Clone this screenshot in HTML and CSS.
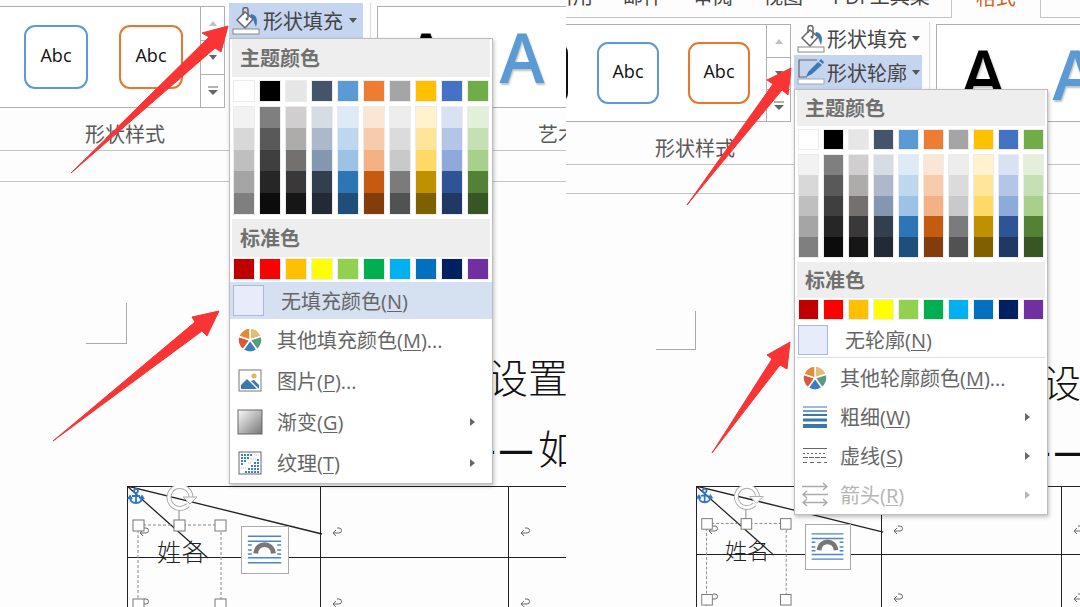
FILE: index.html
```html
<!DOCTYPE html>
<html lang="zh-CN">
<head>
    <meta charset="UTF-8">
    <meta name="viewport" content="width=device-width, initial-scale=1.0">
    <title>形状填充与形状轮廓</title>
    <link rel="stylesheet" href="styles.css">
</head>
<body>
    <!-- shared icons -->
    <svg class="defs" width="0" height="0" aria-hidden="true">
        <symbol id="icon-bucket" viewBox="0 0 28 28">
            <path d="M13 5 L5 13 L13 21 L21 12 Z" fill="#fff" stroke="#666" stroke-width="1.5"/>
            <path d="M11 8 V3 a2.5 2.5 0 0 1 5 0 V11" fill="none" stroke="#666" stroke-width="1.5"/>
            <circle cx="15" cy="12" r="1.5" fill="#666"/>
            <path d="M19 7 C25 8 26 13 24 20 C22 16 22 12 18 9 Z" fill="#3d78b5"/>
            <rect x="1" y="22" width="26" height="5" fill="#fff" stroke="#888"/>
        </symbol>
        <symbol id="icon-outline" viewBox="0 0 28 28">
            <path d="M20 2 H2 V19 H10" fill="none" stroke="#666" stroke-width="1.2"/>
            <path d="M9 19 L11 14 L21 4 L25 7 L15 16 Z" fill="#3d78b5"/>
            <path d="M22 3 L24 1 L27 4 L26 6 Z" fill="#3d78b5"/>
            <rect x="1" y="21" width="26" height="5" fill="#fff" stroke="#9aa7bd"/>
        </symbol>
        <symbol id="icon-wheel" viewBox="0 0 26 26">
            <g stroke="#fff" stroke-width="1.5">
                <path d="M13 13 V1 A12 12 0 0 1 24.4 9.3 Z" fill="#e3bd74"/>
                <path d="M13 13 L24.4 9.3 A12 12 0 0 1 20 22.7 Z" fill="#5a9a82"/>
                <path d="M13 13 L20 22.7 A12 12 0 0 1 6 22.7 Z" fill="#3c7dc0"/>
                <path d="M13 13 L6 22.7 A12 12 0 0 1 1.6 9.3 Z" fill="#d95836"/>
                <path d="M13 13 L1.6 9.3 A12 12 0 0 1 13 1 Z" fill="#e08c3c"/>
            </g>
        </symbol>
        <symbol id="icon-picture" viewBox="0 0 26 26">
            <rect x="2" y="2" width="22" height="21" fill="#fff" stroke="#777"/>
            <circle cx="17" cy="8" r="2.5" fill="#dfb45c"/>
            <path d="M4 21 V17 L10 11 L20 21 Z" fill="#3d78ab"/>
            <path d="M14 13 L17 12 L22 17 V21 Z" fill="#3d78ab"/>
        </symbol>
        <linearGradient id="gray" x1="0" y1="0" x2="1" y2="1">
            <stop offset="0" stop-color="#fafafa"/>
            <stop offset="1" stop-color="#757575"/>
        </linearGradient>
        <symbol id="icon-gradient" viewBox="0 0 26 26">
            <rect x="1" y="1" width="24" height="24" fill="url(#gray)" stroke="#666"/>
        </symbol>
        <symbol id="icon-texture" viewBox="0 0 26 26">
            <rect x="2" y="2" width="22" height="22" fill="#fff" stroke="#666"/>
            <g stroke="#3f7fbf" stroke-width="2" stroke-dasharray="2 1">
                <path d="M4 5 H15 M4 8 H12 M4 11 H9 M4 14 H7"/>
                <path d="M20 10 H23 M17 13 H23 M14 16 H23 M11 19 H23 M8 22 H23"/>
            </g>
            <path d="M17 5 H22 M14 9 H19 M11 13 H15 M4 18 H10" stroke="#a9c6e4" stroke-dasharray="1 1"/>
        </symbol>
        <symbol id="icon-weight" viewBox="0 0 26 26">
            <path d="M1 3 H25" stroke="#3d78b5" stroke-width="1"/>
            <path d="M1 7 H25" stroke="#3d78b5" stroke-width="1.5"/>
            <path d="M1 11 H25" stroke="#3d78b5" stroke-width="2"/>
            <path d="M1 16 H25" stroke="#3d78ab" stroke-width="3"/>
            <path d="M1 22 H25" stroke="#3d78ab" stroke-width="4"/>
        </symbol>
        <symbol id="icon-dashes" viewBox="0 0 26 26" stroke="#666">
            <path d="M1 5.5 H25"/>
            <path d="M1 10.5 H25" stroke-dasharray="2 2"/>
            <path d="M1 14.5 H25" stroke-dasharray="5 1"/>
            <path d="M1 19.5 H25" stroke-dasharray="4 3"/>
        </symbol>
        <symbol id="icon-arrows" viewBox="0 0 26 26">
            <path d="M0 4.5 H25 M21 1 L25 4.5 L21 8 M26 12.5 H1 M5 9 L1 12.5 L5 16 M1 20.5 H25 M5 17 L1 20.5 L5 24 M21 17 L25 20.5 L21 24" fill="none" stroke="#aaa" stroke-width="1.5"/>
        </symbol>
        <symbol id="icon-return" viewBox="0 0 10 10">
            <path d="M5 1 H7 a2 2 0 0 1 0 5 H1 M4 3 L1 6 L4 9" fill="none" stroke="#666"/>
        </symbol>
        <symbol id="icon-more" viewBox="0 0 12 10">
            <path d="M1 1 H11" stroke="#666"/>
            <path d="M1 4 H11 L6 9 Z" fill="#666"/>
        </symbol>
        <!-- diagonal header cell with a selected text box -->
        <symbol id="shape-lines" viewBox="0 0 200 125">
            <path d="M0 0 L81 72 M0 0 L195 48" stroke="#222" stroke-width="1.3" fill="none"/>
            <g stroke="#2f74c8" stroke-width="1.8" fill="none">
                <circle cx="9" cy="5" r="2"/>
                <path d="M9 7 V17 M5 10 H13 M3 11 C3 16 6 17 9 17 C12 17 15 16 15 11 M1 13 L3 10 L5 13 M13 13 L15 10 L17 13"/>
            </g>
            <path d="M11 39 H94 V125 M11 39 V125" fill="none" stroke="#888" stroke-dasharray="3 2"/>
            <path d="M52 24 V36" stroke="#888"/>
            <path d="M61 19 A11 11 0 1 1 64 11" fill="none" stroke="#aaa" stroke-width="5"/>
            <path d="M61 19 A11 11 0 1 1 64 11" fill="none" stroke="#fff" stroke-width="3"/>
            <path d="M56 11 H70 L63 18 Z" fill="#fff" stroke="#aaa"/>
            <g fill="#fff" stroke="#777">
                <rect x="6" y="34" width="11" height="11"/>
                <rect x="47" y="34" width="11" height="11"/>
                <rect x="88" y="34" width="11" height="11"/>
                <rect x="6" y="113" width="11" height="11"/>
                <rect x="88" y="113" width="11" height="11"/>
            </g>
        </symbol>
        <symbol id="icon-layout" viewBox="0 0 47 47">
            <path d="M6 9.5 H40 M6 14.5 H40 M6 18.5 H10 M6 23.5 H10 M6 27.5 H10 M36 18.5 H40 M36 23.5 H40 M36 27.5 H40 M6 31.5 H40 M6 36.5 H40" stroke="#4a86c5" stroke-width="1.5"/>
            <path d="M14 27 C15 15 31 15 32 27" fill="none" stroke="#777" stroke-width="5"/>
        </symbol>
    </svg>

    <main class="compare">
        <section class="shot shot-fill">
            <div class="ribbon">
                <div class="group">
                    <div class="group-body">
                        <div class="gallery">
                            <div class="styles">
                                <button class="style blue">Abc</button>
                                <button class="style orange">Abc</button>
                            </div>
                            <div class="scroller">
                                <button class="up" aria-label="上一行" disabled></button>
                                <button class="down" aria-label="下一行"></button>
                                <button aria-label="其他"><svg width="12" height="10"><use href="#icon-more"/></svg></button>
                            </div>
                        </div>
                        <div class="commands">
                            <div class="dropdown">
                                <button class="command open">
                                    <svg width="28" height="28"><use href="#icon-bucket"/></svg>形状填充<span class="caret"></span>
                                </button>
                                <div class="menu">
                                    <h2>主题颜色</h2>
                                    <div class="swatches theme"></div>
                                    <div class="tints"></div>
                                    <h2>标准色</h2>
                                    <div class="swatches standard"></div>
                                    <button class="item none selected"><span class="empty"></span><span>无填充颜色(<u>N</u>)</span></button>
                                    <button class="item"><svg width="26" height="26"><use href="#icon-wheel"/></svg><span>其他填充颜色(<u>M</u>)...</span></button>
                                    <button class="item"><svg width="26" height="26"><use href="#icon-picture"/></svg><span>图片(<u>P</u>)...</span></button>
                                    <button class="item sub"><svg width="26" height="26"><use href="#icon-gradient"/></svg><span>渐变(<u>G</u>)</span></button>
                                    <button class="item sub"><svg width="26" height="26"><use href="#icon-texture"/></svg><span>纹理(<u>T</u>)</span></button>
                                </div>
                            </div>
                        </div>
                    </div>
                    <div class="group-label">形状样式</div>
                </div>
                <div class="group wordart">
                    <div class="group-body">
                        <div class="gallery">
                            <button class="letter black">A</button>
                            <button class="letter sky">A</button>
                        </div>
                    </div>
                    <div class="group-label">艺术字样式</div>
                </div>
            </div>
            <div class="ruler"></div>
            <div class="page">
                <div class="crop-mark"></div>
                <div class="title">
                    <p>设置</p>
                    <p><span class="dash">—</span><span class="dash">—</span>如</p>
                </div>
                <div class="sheet">
                    <table>
                        <tr>
                            <td><svg width="10" height="10"><use href="#icon-return"/></svg></td>
                            <td><svg width="10" height="10"><use href="#icon-return"/></svg></td>
                            <td><svg width="10" height="10"><use href="#icon-return"/></svg></td>
                        </tr>
                        <tr>
                            <td><svg width="10" height="10"><use href="#icon-return"/></svg></td>
                            <td><svg width="10" height="10"><use href="#icon-return"/></svg></td>
                            <td><svg width="10" height="10"><use href="#icon-return"/></svg></td>
                        </tr>
                    </table>
                    <svg class="shape"><use href="#shape-lines"/></svg>
                    <span class="name">姓名</span>
                    <button class="layout" aria-label="布局选项"><svg><use href="#icon-layout"/></svg></button>
                </div>
            </div>
            <svg class="pointers">
                <path d="M71 173 L209 37 L202 33 L228 26 L221 52 L215 48 Z"/>
                <path d="M53 441 L195 322 L192 317 L219 311 L207 336 L202 331 Z"/>
            </svg>
        </section>

        <section class="shot shot-outline">
            <nav class="tabs">
                <a href="#">引用</a>
                <a href="#">邮件</a>
                <a href="#">审阅</a>
                <a href="#">视图</a>
                <a href="#">PDF工具集</a>
                <a href="#" class="active">格式</a>
            </nav>
            <div class="ribbon">
                <div class="group">
                    <div class="group-body">
                        <div class="gallery">
                            <div class="styles">
                                <button class="style dark" aria-label="黑色"></button>
                                <button class="style blue">Abc</button>
                                <button class="style orange">Abc</button>
                            </div>
                            <div class="scroller">
                                <button class="up" aria-label="上一行" disabled></button>
                                <button class="down" aria-label="下一行"></button>
                                <button aria-label="其他"><svg width="12" height="10"><use href="#icon-more"/></svg></button>
                            </div>
                        </div>
                        <div class="commands">
                            <button class="command">
                                <svg width="28" height="28"><use href="#icon-bucket"/></svg>形状填充<span class="caret"></span>
                            </button>
                            <div class="dropdown">
                                <button class="command open">
                                    <svg width="28" height="28"><use href="#icon-outline"/></svg>形状轮廓<span class="caret"></span>
                                </button>
                                <div class="menu">
                                    <h2>主题颜色</h2>
                                    <div class="swatches theme"></div>
                                    <div class="tints"></div>
                                    <h2>标准色</h2>
                                    <div class="swatches standard"></div>
                                    <button class="item none"><span class="empty"></span><span>无轮廓(<u>N</u>)</span></button>
                                    <hr>
                                    <button class="item"><svg width="26" height="26"><use href="#icon-wheel"/></svg><span>其他轮廓颜色(<u>M</u>)...</span></button>
                                    <button class="item sub"><svg width="26" height="26"><use href="#icon-weight"/></svg><span>粗细(<u>W</u>)</span></button>
                                    <button class="item sub"><svg width="26" height="26"><use href="#icon-dashes"/></svg><span>虚线(<u>S</u>)</span></button>
                                    <button class="item sub" disabled><svg width="26" height="26"><use href="#icon-arrows"/></svg><span>箭头(<u>R</u>)</span></button>
                                </div>
                            </div>
                        </div>
                    </div>
                    <div class="group-label">形状样式</div>
                </div>
                <div class="group wordart">
                    <div class="group-body">
                        <div class="gallery">
                            <button class="letter black">A</button>
                            <button class="letter sky">A</button>
                        </div>
                    </div>
                    <div class="group-label"></div>
                </div>
            </div>
            <div class="ruler"></div>
            <div class="page">
                <div class="crop-mark"></div>
                <div class="title">
                    <p>设</p>
                    <p><span class="dash">—</span><span class="dash">—</span></p>
                </div>
                <div class="sheet">
                    <table>
                        <tr>
                            <td><svg width="10" height="10"><use href="#icon-return"/></svg></td>
                            <td><svg width="10" height="10"><use href="#icon-return"/></svg></td>
                            <td><svg width="10" height="10"><use href="#icon-return"/></svg></td>
                        </tr>
                        <tr>
                            <td><svg width="10" height="10"><use href="#icon-return"/></svg></td>
                            <td><svg width="10" height="10"><use href="#icon-return"/></svg></td>
                            <td><svg width="10" height="10"><use href="#icon-return"/></svg></td>
                        </tr>
                    </table>
                    <svg class="shape"><use href="#shape-lines"/></svg>
                    <span class="name">姓名</span>
                    <button class="layout" aria-label="布局选项"><svg><use href="#icon-layout"/></svg></button>
                </div>
            </div>
            <svg class="pointers">
                <path d="M121 205 L207 84 L201 80 L225 68 L222 95 L216 90 Z"/>
                <path d="M146 453 L206 359 L201 355 L224 342 L221 369 L214 365 Z"/>
            </svg>
        </section>
    </main>

    <script src="script.js"></script>
</body>
</html>
```
FILE: styles.css
```css
:root {
    --line: #c4c4c4;
    --text: #595959;
    --menu-head: #eeeeee;
    --open-bg: #c5d5f0;
    --hover-bg: #d5e0f0;
    --blue: #5b9bd5;
    --orange: #e8762d;
    --pointer: #f83434;
}

* {
    box-sizing: border-box;
}

body {
    margin: 0;
    font-family: "Open Sans", "Noto Sans CJK SC", sans-serif;
    font-size: 20px;
    color: var(--text);
    background-color: #fdfdfd;
}

button {
    font: inherit;
    color: inherit;
    background: none;
    border: none;
    padding: 0;
    cursor: pointer;
}

p, h2 {
    margin: 0;
}

.defs {
    position: absolute;
}

.compare {
    display: grid;
    grid-template-columns: 566fr 514fr;
    height: 100vh;
    overflow: hidden;
}

.shot {
    position: relative;
    overflow: hidden;
    min-width: 0;
}

.shot-fill {
    --style-size: 64px;
    --menu-width: 264px;
    --head: 38px;
    --swatch: 20px;
    --tints: 107px;
    --none: 37px;
    --empty: 31px;
    --row: 41px;
    --item-gap: 14px;
    --name-size: 24px;
    --title-size: 40px;
}

.shot-outline {
    --style-size: 62px;
    --menu-width: 254px;
    --head: 36px;
    --swatch: 19px;
    --tints: 102px;
    --none: 35px;
    --empty: 30px;
    --row: 39px;
    --item-gap: 12px;
    --name-size: 22px;
    --title-size: 38px;
}

/* tabs */
.tabs {
    display: flex;
    align-items: flex-end;
    height: 18px;
    margin-left: -28px;
    border-bottom: 1px solid var(--line);
}

.tabs a {
    flex: none;
    padding: 0 15px;
    line-height: 40px;
    color: #444;
    text-decoration: none;
}

.tabs .active {
    margin: 0 0 -1px 6px;
    padding: 0 24px;
    color: #d2601f;
    background-color: #fdfdfd;
    border: 1px solid var(--line);
    border-width: 0 1px;
}

/* ribbon */
.ribbon {
    display: flex;
    border-bottom: 1px solid var(--line);
}

.shot-fill .ribbon {
    padding-top: 3px;
}

.shot-outline .ribbon {
    padding-top: 4px;
}

.group {
    flex: none;
}

.group-body {
    display: flex;
    gap: 4px;
}

.shot-outline .group-body {
    gap: 3px;
}

.gallery {
    display: flex;
    margin-top: 3px;
    height: 102px;
    background-color: #fff;
    border: 1px solid #b0b0b0;
    border-left: none;
}

.shot-outline .gallery {
    margin-top: 2px;
    height: 98px;
}

.styles {
    display: flex;
    align-items: center;
    gap: 31px;
    width: 200px;
    padding-left: 24px;
    overflow: hidden;
}

.shot-outline .styles {
    gap: 29px;
    padding-left: 0;
    justify-content: flex-end;
    padding-right: 16px;
}

.style {
    flex: none;
    width: var(--style-size);
    height: var(--style-size);
    font-size: 18px;
    line-height: 20px;
    padding-bottom: 4px;
    color: #111;
    background-color: #fff;
    border: 2px solid var(--blue);
    border-radius: 11px;
}

.style.orange {
    border-color: var(--orange);
}

.style.dark {
    border-color: #111;
}

.scroller {
    display: grid;
    grid-template-rows: repeat(3, 1fr);
    width: 24px;
    border-left: 1px solid #b0b0b0;
}

.scroller button {
    display: flex;
    align-items: center;
    justify-content: center;
}

.scroller button + button {
    border-top: 1px solid #b0b0b0;
}

.up::before,
.down::before {
    content: "";
    border: 4px solid transparent;
    border-top: 5px solid #666;
    border-bottom: none;
}

.up::before {
    border-top: none;
    border-bottom: 5px solid #c0c0c0;
}

.commands {
    padding-right: 7px;
    border-right: 1px solid #dcdcdc;
}

.dropdown {
    position: relative;
}

.command {
    display: flex;
    align-items: center;
    gap: 3px;
    width: 134px;
    height: 35px;
    padding-left: 3px;
    white-space: nowrap;
    color: #444;
}

.shot-outline .command {
    width: 128px;
    height: 33px;
    gap: 2px;
}

.command.open {
    background-color: var(--open-bg);
}

.shot-outline .command.open {
    height: 34px;
}

.caret {
    margin-left: 3px;
    border: 4px solid transparent;
    border-top: 5px solid #555;
    border-bottom: none;
}

.group-label {
    height: 42px;
    padding: 12px 0 0 85px;
    line-height: 30px;
}

.shot-outline .group-label {
    padding-left: 89px;
}

.wordart {
    flex: 1;
    margin-left: 6px;
    min-width: 0;
}

.wordart .gallery {
    flex: 1;
    border-left: 1px solid #b0b0b0;
    border-right: none;
    overflow: hidden;
}

.wordart .group-label {
    padding-left: 161px;
    white-space: nowrap;
    overflow: hidden;
}

.letter {
    flex: none;
    width: 96px;
    font-size: 68px;
    font-weight: 600;
    line-height: 98px;
    text-shadow: 1px 2px 2px rgba(0, 0, 0, 0.25);
}

.shot-outline .letter {
    width: 92px;
}

.letter.black {
    color: #000;
}

.letter.sky {
    color: var(--blue);
}

/* colour menu */
.menu {
    position: absolute;
    top: 100%;
    left: 0;
    z-index: 2;
    width: var(--menu-width);
    background-color: #fff;
    border: 1px solid #bdbdbd;
    box-shadow: 1px 2px 4px rgba(0, 0, 0, 0.25);
}

.menu h2 {
    height: var(--head);
    margin: 0 2px;
    padding: 1px 0 0 8px;
    font-size: 20px;
    font-weight: 700;
    line-height: var(--head);
    color: #707070;
    background-color: var(--menu-head);
}

.swatches,
.tints {
    display: flex;
    gap: 6px;
    padding: 0 4px;
}

.theme {
    margin: 4px 0 6px;
}

.standard {
    margin: 2px 0 3px;
}

.tints {
    height: var(--tints);
    margin-bottom: 5px;
}

.swatches button,
.tint-column {
    width: var(--swatch);
    box-shadow: 0 0 0 1px #ececec;
}

.swatches button {
    height: var(--swatch);
}

.tint-column {
    display: grid;
    grid-template-rows: repeat(5, 1fr);
}

.item {
    display: flex;
    align-items: center;
    gap: var(--item-gap);
    width: 100%;
    height: var(--row);
    padding: 0 17px 0 7px;
    text-align: left;
    white-space: nowrap;
    color: #666;
}

.item u {
    text-decoration-thickness: 1px;
    text-underline-offset: 2px;
}

.item.none {
    gap: 17px;
    height: var(--none);
    padding-left: 3px;
}

.item.selected {
    background-color: var(--hover-bg);
}

.empty {
    width: var(--empty);
    height: var(--empty);
    background-color: #e6ecfa;
    border: 1px solid #a9bbdc;
}

.item.sub::after {
    content: "";
    margin-left: auto;
    border: 4px solid transparent;
    border-left: 5px solid #666;
    border-right: none;
}

.item:disabled {
    color: #b5b5b5;
}

.item.sub:disabled::after {
    border-left-color: #b5b5b5;
}

.menu hr {
    height: 1px;
    margin: 0 2px;
    border: none;
    background-color: #dedede;
}

/* document */
.ruler {
    height: 31px;
    border-bottom: 1px solid var(--line);
}

.shot-outline .ruler {
    height: 29px;
}

.crop-mark {
    width: 41px;
    height: 41px;
    margin: 121px 0 0 86px;
    border: 1px solid #aaa;
    border-width: 0 1px 1px 0;
}

.shot-outline .crop-mark {
    width: 40px;
    height: 39px;
    margin: 117px 0 0 90px;
}

.title {
    padding-left: 488px;
    font-family: "Liberation Serif", "Noto Sans CJK SC", serif;
    font-size: var(--title-size);
    font-weight: 300;
    line-height: 71px;
    color: #111;
}

.title p {
    display: flex;
    white-space: nowrap;
}

.title p + p {
    margin-left: -26px;
}

.dash {
    margin-right: 6px;
    font-family: "Liberation Sans", sans-serif;
    font-size: 32px;
    font-weight: 700;
}

.shot-outline .title {
    padding-left: 477px;
    line-height: 68px;
}

.sheet {
    position: relative;
    margin-left: 127px;
}

.shot-outline .sheet {
    margin-left: 130px;
}

table {
    table-layout: fixed;
    width: 569px;
    border-collapse: collapse;
}

.shot-outline table {
    width: 545px;
}

td {
    height: 71px;
    padding: 40px 0 0 11px;
    vertical-align: top;
    line-height: 0;
    border: 1px solid #222;
}

td:first-child {
    width: 193px;
}

.shot-outline td {
    height: 68px;
    padding-top: 38px;
}

.shot-outline td:first-child {
    width: 185px;
}

.shape {
    position: absolute;
    top: 0;
    left: 0;
    width: 200px;
    height: 125px;
}

.shot-outline .shape {
    width: 192px;
    height: 120px;
}

.name {
    position: absolute;
    top: 50px;
    left: 30px;
    font-size: var(--name-size);
    font-weight: 300;
    line-height: 32px;
    color: #222;
}

.shot-outline .name {
    top: 48px;
    left: 29px;
}

.layout {
    position: absolute;
    top: 40px;
    left: 114px;
    width: 48px;
    height: 48px;
    background-color: #fff;
    border: 1px solid #aaa;
}

.layout svg {
    display: block;
    width: 100%;
    height: 100%;
}

.shot-outline .layout {
    top: 38px;
    left: 109px;
    width: 46px;
    height: 46px;
}

/* red pointers over the screen */
.pointers {
    position: absolute;
    inset: 0;
    z-index: 3;
    width: 100%;
    height: 100%;
    fill: var(--pointer);
    stroke: var(--pointer);
    pointer-events: none;
}
```
FILE: script.js
```javascript
const themeColors = {
    '#ffffff': ['#f2f2f2', '#d8d8d8', '#bfbfbf', '#a5a5a5', '#7f7f7f'],
    '#000000': ['#7f7f7f', '#595959', '#3f3f3f', '#262626', '#0c0c0c'],
    '#e7e6e6': ['#d0cece', '#aeabab', '#757070', '#3a3838', '#171616'],
    '#44546a': ['#d6dce4', '#adb9ca', '#8496b0', '#323f4f', '#222a35'],
    '#5b9bd5': ['#deebf6', '#bdd7ee', '#9cc3e5', '#2e75b5', '#1e4e79'],
    '#ed7d31': ['#fbe5d5', '#f7cbac', '#f4b183', '#c55a11', '#833c0b'],
    '#a5a5a5': ['#ededed', '#dbdbdb', '#c9c9c9', '#7b7b7b', '#525252'],
    '#ffc000': ['#fff2cc', '#fee599', '#ffd965', '#bf9000', '#7f6000'],
    '#4472c4': ['#d9e2f3', '#b4c6e7', '#8eaadb', '#2f5496', '#1f3864'],
    '#70ad47': ['#e2efd9', '#c5e0b3', '#a8d08d', '#538135', '#375623']
};
const standardColors = ['#c00000', '#ff0000', '#ffc000', '#ffff00', '#92d050',
    '#00b050', '#00b0f0', '#0070c0', '#002060', '#7030a0'];

function addSwatch(parent, color) {
    const button = document.createElement('button');
    button.style.backgroundColor = color;
    button.setAttribute('aria-label', color);
    parent.appendChild(button);
}

document.querySelectorAll('.menu').forEach(menu => {
    const theme = menu.querySelector('.theme');
    const tints = menu.querySelector('.tints');
    const standard = menu.querySelector('.standard');

    Object.keys(themeColors).forEach(color => {
        addSwatch(theme, color);
        const column = document.createElement('div');
        column.className = 'tint-column';
        themeColors[color].forEach(tint => addSwatch(column, tint));
        tints.appendChild(column);
    });

    standardColors.forEach(color => addSwatch(standard, color));
});
```
